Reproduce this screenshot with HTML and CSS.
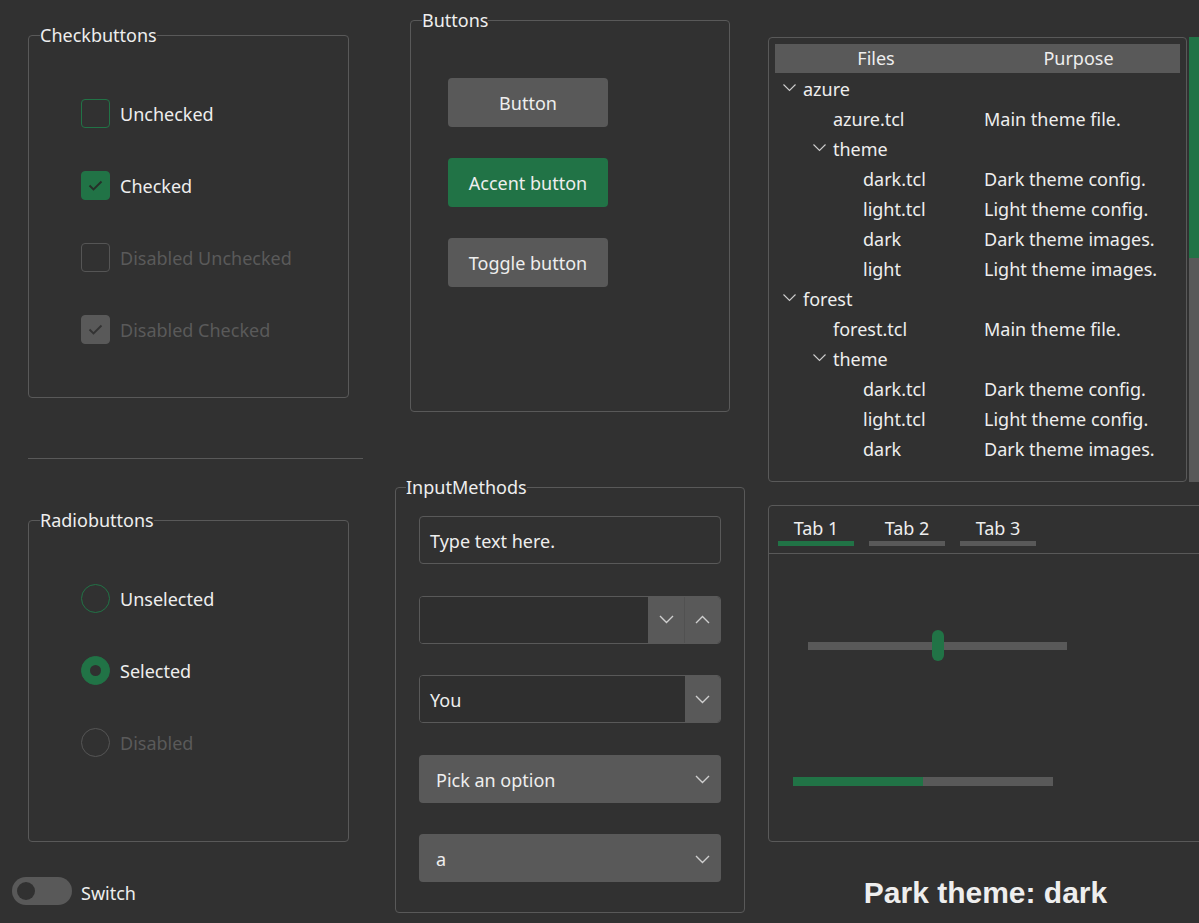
FILE: index.html
```html
<!DOCTYPE html>
<html lang="en">
<head>
<meta charset="utf-8">
<title>Park theme: dark</title>
<link rel="stylesheet" href="styles.css">
</head>
<body>
<div class="app">
  <div class="col col-left">
    <fieldset class="group group-check">
      <legend>Checkbuttons</legend>
      <div class="opt-list">
        <div class="opt"><span class="cbox"></span><span>Unchecked</span></div>
        <div class="opt"><span class="cbox cbox-on"><svg viewBox="0 0 29 29" width="29" height="29"><polyline points="8.5,14.5 12.5,18.5 20.5,10.5" fill="none" stroke="#263029" stroke-width="1.9"/></svg></span><span>Checked</span></div>
        <div class="opt opt-dis"><span class="cbox cbox-dis"></span><span>Disabled Unchecked</span></div>
        <div class="opt opt-dis"><span class="cbox cbox-dis-on"><svg viewBox="0 0 29 29" width="29" height="29"><polyline points="8.5,14.5 12.5,18.5 20.5,10.5" fill="none" stroke="#333333" stroke-width="1.9"/></svg></span><span>Disabled Checked</span></div>
      </div>
    </fieldset>
    <div class="sep"></div>
    <fieldset class="group group-radio">
      <legend>Radiobuttons</legend>
      <div class="opt-list opt-list-radio">
        <div class="opt"><span class="rbox"></span><span>Unselected</span></div>
        <div class="opt"><span class="rbox rbox-on"><span class="rdot"></span></span><span>Selected</span></div>
        <div class="opt opt-dis"><span class="rbox rbox-dis"></span><span>Disabled</span></div>
      </div>
    </fieldset>
    <div class="switch"><span class="switch-track"><span class="switch-knob"></span></span><span>Switch</span></div>
  </div>

  <div class="col col-mid">
    <fieldset class="group group-buttons">
      <legend>Buttons</legend>
      <div class="btn-list">
        <div class="btn">Button</div>
        <div class="btn btn-accent">Accent button</div>
        <div class="btn">Toggle button</div>
      </div>
    </fieldset>
    <fieldset class="group group-inputs">
      <legend>InputMethods</legend>
      <div class="inputs">
        <div class="field entry"><span class="field-text">Type text here.</span></div>
        <div class="field spin">
          <span class="field-text"></span>
          <span class="field-btn"><svg width="15" height="9" viewBox="0 0 15 9"><polyline points="1,1 7.5,7.5 14,1" fill="none" stroke="#cfcfcf" stroke-width="1.4"/></svg></span>
          <span class="field-btn field-btn-split"><svg width="15" height="9" viewBox="0 0 15 9"><polyline points="1,8 7.5,1.5 14,8" fill="none" stroke="#cfcfcf" stroke-width="1.4"/></svg></span>
        </div>
        <div class="field combo">
          <span class="field-text">You</span>
          <span class="field-btn"><svg width="15" height="9" viewBox="0 0 15 9"><polyline points="1,1 7.5,7.5 14,1" fill="none" stroke="#cfcfcf" stroke-width="1.4"/></svg></span>
        </div>
        <div class="menu"><span>Pick an option</span><svg width="15" height="9" viewBox="0 0 15 9"><polyline points="1,1 7.5,7.5 14,1" fill="none" stroke="#cfcfcf" stroke-width="1.4"/></svg></div>
        <div class="menu"><span>a</span><svg width="15" height="9" viewBox="0 0 15 9"><polyline points="1,1 7.5,7.5 14,1" fill="none" stroke="#cfcfcf" stroke-width="1.4"/></svg></div>
      </div>
    </fieldset>
  </div>

  <div class="col col-right">
    <div class="tree-wrap">
      <div class="tree">
        <div class="tree-head"><div>Files</div><div>Purpose</div></div>
        <div class="row"><div class="cf"><span class="twist"><svg width="13" height="8" viewBox="0 0 13 8"><polyline points="0.5,0.5 6.5,6.5 12.5,0.5" fill="none" stroke="#cfcfcf" stroke-width="1.1"/></svg></span>azure</div><div class="cp"></div></div>
        <div class="row"><div class="cf lv1"><span class="twist"></span>azure.tcl</div><div class="cp">Main theme file.</div></div>
        <div class="row"><div class="cf lv1"><span class="twist"><svg width="13" height="8" viewBox="0 0 13 8"><polyline points="0.5,0.5 6.5,6.5 12.5,0.5" fill="none" stroke="#cfcfcf" stroke-width="1.1"/></svg></span>theme</div><div class="cp"></div></div>
        <div class="row"><div class="cf lv2"><span class="twist"></span>dark.tcl</div><div class="cp">Dark theme config.</div></div>
        <div class="row"><div class="cf lv2"><span class="twist"></span>light.tcl</div><div class="cp">Light theme config.</div></div>
        <div class="row"><div class="cf lv2"><span class="twist"></span>dark</div><div class="cp">Dark theme images.</div></div>
        <div class="row"><div class="cf lv2"><span class="twist"></span>light</div><div class="cp">Light theme images.</div></div>
        <div class="row"><div class="cf"><span class="twist"><svg width="13" height="8" viewBox="0 0 13 8"><polyline points="0.5,0.5 6.5,6.5 12.5,0.5" fill="none" stroke="#cfcfcf" stroke-width="1.1"/></svg></span>forest</div><div class="cp"></div></div>
        <div class="row"><div class="cf lv1"><span class="twist"></span>forest.tcl</div><div class="cp">Main theme file.</div></div>
        <div class="row"><div class="cf lv1"><span class="twist"><svg width="13" height="8" viewBox="0 0 13 8"><polyline points="0.5,0.5 6.5,6.5 12.5,0.5" fill="none" stroke="#cfcfcf" stroke-width="1.1"/></svg></span>theme</div><div class="cp"></div></div>
        <div class="row"><div class="cf lv2"><span class="twist"></span>dark.tcl</div><div class="cp">Dark theme config.</div></div>
        <div class="row"><div class="cf lv2"><span class="twist"></span>light.tcl</div><div class="cp">Light theme config.</div></div>
        <div class="row"><div class="cf lv2"><span class="twist"></span>dark</div><div class="cp">Dark theme images.</div></div>
      </div>
      <div class="vscroll"><div class="vscroll-thumb"></div><div class="vscroll-rest"></div></div>
    </div>

    <div class="notebook">
      <div class="tabs">
        <div class="tab tab-active"><span>Tab 1</span><span class="tab-bar"></span></div>
        <div class="tab"><span>Tab 2</span><span class="tab-bar"></span></div>
        <div class="tab"><span>Tab 3</span><span class="tab-bar"></span></div>
      </div>
      <div class="pane">
        <div class="scale"><span class="scale-track"></span><span class="scale-thumb"></span></div>
        <div class="progress"><span class="progress-fill" style="width:50%"></span></div>
      </div>
    </div>

    <div class="title">Park theme: dark</div>
  </div>
</div>
</body>
</html>
```

FILE: styles.css
```css
* { box-sizing: border-box; }
html, body { margin: 0; padding: 0; }
body {
  background: #313131;
  color: #eeeeee;
  font-family: "Noto Sans", "Open Sans", sans-serif;
  font-size: 18px;
  line-height: 24px;
  width: 1199px;
  height: 923px;
  overflow: hidden;
}
.app { display: flex; align-items: flex-start; height: 923px; }
.col { display: flex; flex-direction: column; flex: none; }
.col-left { width: 363px; padding-left: 12px; }
.col-mid { width: 350px; margin-left: 32px; }
.col-right { width: 431px; margin-left: 23px; }

/* groups (labelframes) */
.group {
  margin: 0;
  padding: 0;
  border: 1px solid #595959;
  border-radius: 4px;
  min-width: 0;
}
.group legend { padding: 0; margin-left: 11px; line-height: 24px; color: #eeeeee; }

.group-check { margin: 23px 0 0 16px; width: 321px; }
.group-radio { margin: 49px 0 0 16px; width: 321px; }
.opt-list { display: flex; flex-direction: column; gap: 43px; padding: 52px 0 53px 52px; }
.opt-list-radio { padding-bottom: 84px; }
.opt { display: flex; align-items: center; gap: 10px; height: 29px; }
.opt-dis { color: #5a5a5a; }

.cbox { width: 29px; height: 29px; flex: none; border-radius: 4px; border: 1px solid #217346; display: block; }
.cbox svg { display: block; margin: -1px; }
.cbox-on { background: #217346; }
.cbox-dis { border-color: #555555; }
.cbox-dis-on { background: #595959; border-color: #595959; }

.rbox { width: 29px; height: 29px; flex: none; border-radius: 50%; border: 1px solid #217346; display: flex; align-items: center; justify-content: center; }
.rbox-on { background: #217346; }
.rdot { width: 11px; height: 11px; border-radius: 50%; background: #303030; }
.rbox-dis { border-color: #555555; }

.sep { margin: 60px 0 0 16px; width: 335px; height: 1px; background: #595959; }

.switch { display: flex; align-items: center; gap: 9px; margin-top: 35px; }
.switch-track { width: 60px; height: 28px; border-radius: 14px; background: #595959; display: flex; align-items: center; padding-left: 5px; }
.switch-knob { width: 18px; height: 18px; border-radius: 50%; background: #313131; }
.switch > span:last-child { padding-top: 3px; }

/* buttons */
.group-buttons { margin: 8px 0 0 15px; width: 320px; }
.btn-list { display: flex; flex-direction: column; gap: 31px; padding: 46px 0 124px 37px; }
.btn {
  width: 160px; height: 49px; border-radius: 4px; background: #595959;
  display: flex; align-items: center; justify-content: center; color: #eeeeee;
}
.btn-accent { background: #217346; }

/* inputs */
.group-inputs { margin-top: 63px; width: 350px; }
.group-inputs legend { margin-left: 10px; }
.inputs { display: flex; flex-direction: column; gap: 31.5px; padding: 17px 23px 30px 23px; }
.field {
  height: 48px; border: 1px solid #595959; border-radius: 4px; overflow: hidden;
  display: flex; align-items: stretch;
}
.field-text { flex: 1; padding-left: 10px; display: flex; align-items: center; background: #2f2f2f; padding-top: 2px; }
.entry .field-text { background: transparent; }
.field-btn { width: 35px; flex: none; background: #595959; display: flex; align-items: center; justify-content: center; }
.spin .field-btn { width: 36px; }
.field-btn-split { border-left: 1px solid #515151; }
.menu {
  height: 48px; border-radius: 4px; background: #595959;
  display: flex; align-items: center; justify-content: space-between;
  padding: 2px 11px 0 17px;
}
.menu svg { flex: none; }

/* tree */
.tree-wrap { margin-top: 37px; display: flex; gap: 2px; height: 445px; }
.tree { width: 419px; flex: none; border: 1px solid #595959; border-radius: 4px; padding: 6px 6px 0 6px; }
.tree-head { display: grid; grid-template-columns: 202px 1fr; height: 29px; line-height: 29px; background: #595959; text-align: center; margin-bottom: 1px; }
.row { display: grid; grid-template-columns: 202px 1fr; height: 30px; align-items: center; }
.cf { display: flex; align-items: center; }
.lv1 { padding-left: 30px; }
.lv2 { padding-left: 60px; }
.twist { width: 28px; flex: none; display: flex; align-items: center; padding-left: 8px; margin-top: -3px; }
.cp { padding-left: 7px; }
.vscroll { width: 14px; flex: none; display: flex; flex-direction: column; }
.vscroll-thumb { height: 221px; background: #217346; }
.vscroll-rest { flex: 1; background: #595959; }

/* notebook */
.notebook { margin-top: 23px; width: 445px; border: 1px solid #595959; border-radius: 4px; }
.tabs { display: flex; gap: 15px; padding: 10px 0 7px 9px; border-bottom: 1px solid #595959; }
.tab { width: 76px; display: flex; flex-direction: column; align-items: center; }
.tab-bar { display: block; width: 100%; height: 5px; margin-top: 1px; background: #595959; }
.tab-active .tab-bar { background: #217346; }
.pane { display: flex; flex-direction: column; align-items: flex-start; padding-bottom: 55px; }
.scale { display: grid; width: 259px; height: 31px; margin: 76px 0 0 39px; }
.scale > span { grid-area: 1 / 1; }
.scale-track { align-self: center; height: 8px; background: #595959; }
.scale-thumb { justify-self: center; width: 12px; height: 31px; border-radius: 6px; background: #217346; }
.progress { width: 260px; height: 9px; margin: 116px 0 0 24px; background: #595959; display: flex; }
.progress-fill { display: block; height: 100%; background: #217346; }

.title {
  margin-top: 33px; padding-left: 4px; text-align: center;
  font-family: "Liberation Sans", Arial, sans-serif; font-weight: bold;
  font-size: 30px; line-height: 36px; color: #eeeeee;
}
```
